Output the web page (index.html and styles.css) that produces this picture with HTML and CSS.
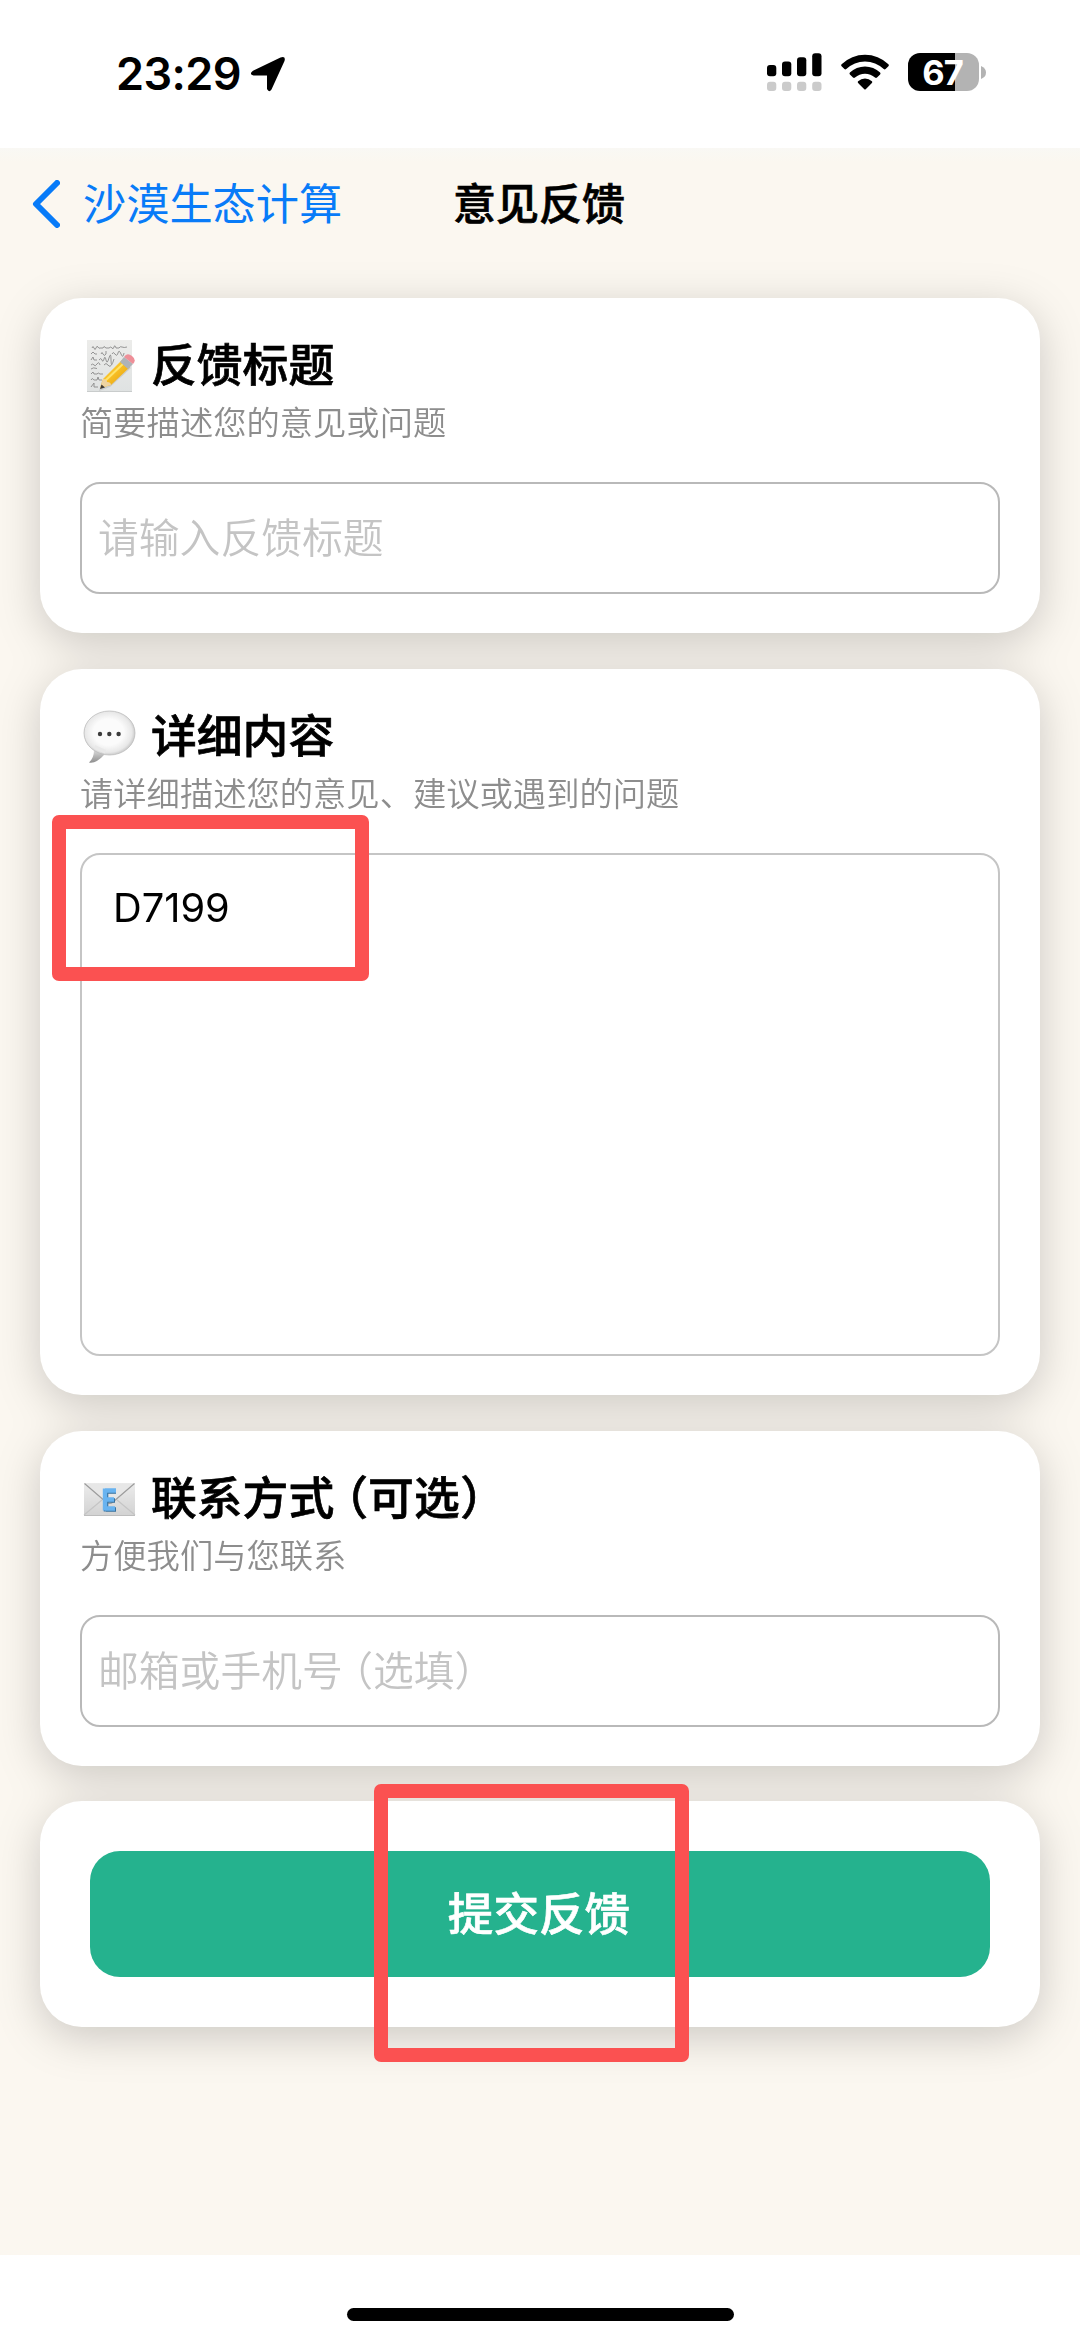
FILE: index.html
```html
<!DOCTYPE html>
<html lang="zh-CN">
<head>
<meta charset="utf-8">
<title>意见反馈</title>
<link rel="stylesheet" href="styles.css">
</head>
<body>
<div class="screen">
  <header class="status">
    <div class="status-left">
      <span class="time">23:29</span>
      <svg class="location" viewBox="0 0 36 36"><path d="M3 14.800 30.500 1.500Q36 -.3 34.500 5L21.500 33.500Q19 37 17 33V19.500H3.500Q-1.500 18 3 14.800Z"/></svg>
    </div>
    <div class="status-right">
      <svg class="signal" viewBox="0 0 55 38">
        <g><rect x="0" y="12" width="9.300" height="11.300" rx="3"/><rect x="15" y="8.500" width="9.300" height="14.800" rx="3"/><rect x="30" y="4.300" width="9.300" height="19" rx="3"/><rect x="45.200" y=".3" width="9.300" height="23" rx="3"/></g>
        <g fill="#cbcbcb"><rect x="0" y="28.700" width="9.300" height="9.300" rx="3"/><rect x="15" y="28.700" width="9.300" height="9.300" rx="3"/><rect x="30" y="28.700" width="9.300" height="9.300" rx="3"/><rect x="45.200" y="28.700" width="9.300" height="9.300" rx="3"/></g>
      </svg>
      <svg class="wifi" viewBox="0 0 48 36"><path d="M.6 10.200A34 34 0 0 1 47.400 10.200Q48.300 11.200 47.400 12.200L44.600 15Q43.600 15.800 42.700 15A27 27 0 0 0 5.300 15Q4.400 15.800 3.400 15L.6 12.200Q-.3 11.200 .6 10.200Z"/><path d="M8.900 18.500A22 22 0 0 1 39.100 18.500Q40 19.500 39.100 20.500L36 23.500Q35 24.300 34 23.500A15 15 0 0 0 14 23.500Q13 24.300 12 23.500L8.900 20.500Q8 19.500 8.900 18.500Z"/><path d="M17.100 27.200A10.500 10.500 0 0 1 30.900 27.200Q31.700 28 30.900 28.900L24.700 35.200Q24 35.800 23.300 35.200L17.100 28.900Q16.300 28 17.100 27.200Z"/></svg>
      <div class="battery"><span class="level">67</span><svg class="tip" viewBox="0 0 5 13"><path d="M0 0Q5 2 5 6.500T0 13Z"/></svg></div>
    </div>
  </header>

  <main class="page">
    <nav class="nav">
      <a class="back">
        <svg class="chevron" viewBox="0 0 28 48"><path d="M25 3 4 24 25 45"/></svg>
        <span>沙漠生态计算</span>
      </a>
      <h1 class="nav-title">意见反馈</h1>
    </nav>

    <div class="form">
      <div class="cards">
        <section class="card">
          <h2 class="card-title">
            <svg class="emoji" viewBox="0 0 54 56">
              <defs>
                <linearGradient id="paper" x2="0" y2="1"><stop stop-color="#ececea"/><stop offset="1" stop-color="#dfe2e2"/></linearGradient>
                <linearGradient id="pencil" x2="1" y2="1"><stop stop-color="#fcd94d"/><stop offset=".5" stop-color="#f7bd22"/><stop offset="1" stop-color="#d99413"/></linearGradient>
              </defs>
              <rect x="5" y="2" width="45" height="52" fill="url(#paper)"/>
              <path d="M5 53.500H50" stroke="#c9cccc"/>
              <g fill="none" stroke="#8a8a8a" stroke-width=".9">
                <path d="M10 10q1-3 2 0t2 0 2-1 2 1h3l1-1.500 2 1.500h3q2-2 3 0t2-1 2 1h3q1-2 3-1t5 0"/>
                <path d="M9 16l2-2 2 2h2M19 16q1-3 2 0t3 0v-3M30 16q1-3 3 0t3-1 3 1 3-1"/>
                <path d="M9 22l2-3 1 3h3M17 22q2-3 3 0t2-1 2 1 3-2 2 2 3-1"/>
                <path d="M9 27q2-2 3 0t3-1 3 1M22 27q2-3 4 0t4-1"/>
                <path d="M9 31q2-2 6-.5"/>
                <path d="M9 36l2-2 1 2h3q1-2 3 0h3M9 42q1-3 3 0h3l1-3 1 3h3M9 49l3-4v4h4"/>
              </g>
              <path d="M17 53 20 43 41 22 49 30 28 49Z" fill="#999" opacity=".3"/>
              <path d="M18 50 21 41 40 22 48 29 29 47Z" fill="url(#pencil)"/>
              <path d="M23 43 43 24" stroke="#ffe36a" stroke-width="2"/>
              <path d="M18 50 21 41Q25 41 25 44 29 44 29 47Z" fill="#eed3a1"/>
              <path d="M18 51 19.500 46.500 23 49.500Z" fill="#3f3a36"/>
              <path d="M38 24 42 19 51 26 46 31Z" fill="#aeb3b7"/>
              <path d="M42 19Q45 14 50 18 55 22 51 26Z" fill="#ee8f98"/>
            </svg>
            <span>反馈标题</span>
          </h2>
          <p class="card-hint">简要描述您的意见或问题</p>
          <div class="field placeholder">请输入反馈标题</div>
        </section>

        <section class="card">
          <h2 class="card-title">
            <svg class="emoji" viewBox="0 0 54 56">
              <defs>
                <radialGradient id="bubble" cx=".48" cy=".48" r=".54"><stop offset=".55" stop-color="#fbfbfb"/><stop offset=".85" stop-color="#e8e8e8"/><stop offset="1" stop-color="#c2c2c2"/></radialGradient>
                <linearGradient id="tail" x2="0" y2="1"><stop stop-color="#dcdcdc"/><stop offset="1" stop-color="#8e8e8e"/></linearGradient>
              </defs>
              <path d="M12 41Q12 49 7 53.500 14 55 23 45Z" fill="url(#tail)"/>
              <ellipse cx="27.500" cy="24" rx="25.500" ry="22" fill="url(#bubble)" stroke="#bdbdbd" stroke-width=".8"/>
              <path d="M12.500 40 23 44.500 24 41 13 36Z" fill="#e9e9e9"/>
              <g fill="#3c3c3c"><circle cx="18" cy="25" r="2.200"/><circle cx="27.300" cy="25" r="2.200"/><circle cx="36.600" cy="25" r="2.200"/></g>
            </svg>
            <span>详细内容</span>
          </h2>
          <p class="card-hint">请详细描述您的意见、建议或遇到的问题</p>
          <div class="field field-tall">D7199</div>
        </section>

        <section class="card">
          <h2 class="card-title">
            <svg class="emoji" viewBox="0 0 54 56">
              <defs>
                <linearGradient id="mail" x2="0" y2="1"><stop stop-color="#ececec"/><stop offset="1" stop-color="#d2d2d2"/></linearGradient>
              </defs>
              <rect x="2" y="12" width="51" height="33" fill="url(#mail)"/>
              <path d="M2 44 20 29M53 44 35 29" stroke="#c5c5c5" stroke-width="1.200"/>
              <path d="M2.500 12.500 24 31Q27.500 34 31 31L52.500 12.500" fill="#e7e7e7" stroke="#9d9d9d" stroke-width="1.200"/>
              <path d="M2 44.500H53" stroke="#bdbdbd"/>
              <path d="M24 20.500H34M24 29.500H33M24 38.500H34M24 18.500V40.500" fill="none" stroke="#36719f" stroke-width="4.600"/>
              <path d="M23 19.500H34M23 28.500H32M23 37.500H33M23 17.500V39.500" fill="none" stroke="#68b3f0" stroke-width="4.400"/>
            </svg>
            <span>联系方<span class="before-paren">式</span>（可<span class="before-close">选</span>）</span>
          </h2>
          <p class="card-hint">方便我们与您联系</p>
          <div class="field placeholder">邮箱或手机<span class="before-paren">号</span>（选填）</div>
        </section>

        <section class="card card-submit">
          <button class="submit">提交反馈</button>
        </section>
      </div>
      <div class="mark mark-code"></div>
      <div class="mark mark-submit"></div>
    </div>
  </main>

  <footer class="home"><div class="home-bar"></div></footer>
</div>
</body>
</html>
```
FILE: styles.css
```css
* { box-sizing: border-box; }

body {
  margin: 0;
  background: #fff;
  color: #000;
  font-family: Inter, "Noto Sans CJK SC", sans-serif;
}

.screen {
  display: flex;
  flex-direction: column;
  width: 1080px;
  height: 2341px;
  overflow: hidden;
}

svg { display: block; flex: none; }

.status {
  display: flex;
  justify-content: space-between;
  height: 148px;
  padding: 53px 94px 0 116px;
}

.status-left { display: flex; height: 41px; align-items: center; gap: 9px; }
.time { font-size: 45px; font-weight: 600; line-height: 41px; letter-spacing: -0.6px; }
.location { width: 36px; height: 36px; }

.status-right { display: flex; height: 38px; align-items: flex-start; }
.signal { width: 55px; height: 38px; }
.wifi { width: 48px; height: 36px; margin: 1px 0 0 18.500px; }

.battery { display: flex; align-items: center; gap: 2px; margin-left: 19.500px; }
.level {
  width: 71px;
  height: 38px;
  padding-right: 2px;
  border-radius: 12px;
  background: linear-gradient(to right, #000 47px, #b3b3b3 47px);
  color: #fff;
  font-size: 34.500px;
  font-weight: 700;
  line-height: 39px;
  letter-spacing: -1px;
  text-align: center;
}
.tip { width: 5px; height: 13px; fill: #b3b3b3; }

.page {
  height: 2107px;
  background: linear-gradient(#f9f8f4, #fbf7f0 14px);
}

.nav {
  display: grid;
  grid-template-columns: 1fr auto 1fr;
  align-items: center;
  height: 110px;
  padding: 1px 34px 0 32px;
}
.back {
  display: flex;
  align-items: center;
  gap: 23px;
  color: #087bf8;
  font-size: 43.200px;
  line-height: 60px;
  white-space: nowrap;
}
.chevron {
  width: 28px;
  height: 48px;
  fill: none;
  stroke: #087bf8;
  stroke-width: 6;
  stroke-linecap: round;
  stroke-linejoin: round;
}
.nav-title {
  margin: 0;
  font-size: 43px;
  font-weight: 500;
  line-height: 60px;
  -webkit-text-stroke: 0.7px;
}

.form { position: relative; padding: 40px 40px 0; }

.cards {
  display: flex;
  flex-direction: column;
  gap: 36px;
  filter: drop-shadow(0 10px 22px rgba(0, 0, 0, 0.19));
}

.card {
  padding: 38px 40px 39px;
  border-radius: 42px;
  background: #fff;
}
.card-title {
  display: flex;
  align-items: center;
  gap: 15px;
  height: 60px;
  margin: 0;
  padding-left: 2px;
  font-size: 45.800px;
  font-weight: 500;
  line-height: 60px;
  -webkit-text-stroke: 0.7px;
}
.emoji { width: 54px; height: 56px; }
.before-paren { letter-spacing: -0.26em; }
.before-close { letter-spacing: 0.01em; }

.card-hint {
  margin: 5px 0 37px;
  color: #8d8d8d;
  font-size: 33.300px;
  font-weight: 350;
  line-height: 44px;
}

.field {
  height: 112px;
  padding: 0 16px;
  border: 2px solid #b9b9b9;
  border-radius: 20px;
  font-size: 40.800px;
  line-height: 109px;
}
.placeholder { color: #c4c4c4; font-weight: 350; }
.field-tall {
  height: 503px;
  padding: 26px 31px;
  border-color: #c5c5c5;
  font-size: 39.800px;
  line-height: 54px;
}

.card-submit { margin-top: -1px; padding: 50px; }
.submit {
  display: block;
  width: 100%;
  height: 126px;
  padding: 1px 2px 0 0;
  border: 0;
  border-radius: 30px;
  background: #25b28e;
  color: #fff;
  font: 500 45.600px/125px Inter, "Noto Sans CJK SC", sans-serif;
  -webkit-text-stroke: 0.6px;
}

/* Highlight frames laid over the form */
.mark {
  position: absolute;
  border: 14px solid #fb5151;
  border-radius: 7px;
}
.mark-code { left: 52px; top: 557px; width: 317px; height: 166px; }
.mark-submit { left: 374px; top: 1526px; width: 315px; height: 278px; }

.home { display: flex; justify-content: center; padding-top: 53px; }
.home-bar { width: 387px; height: 13px; border-radius: 7px; background: #000; }
```
